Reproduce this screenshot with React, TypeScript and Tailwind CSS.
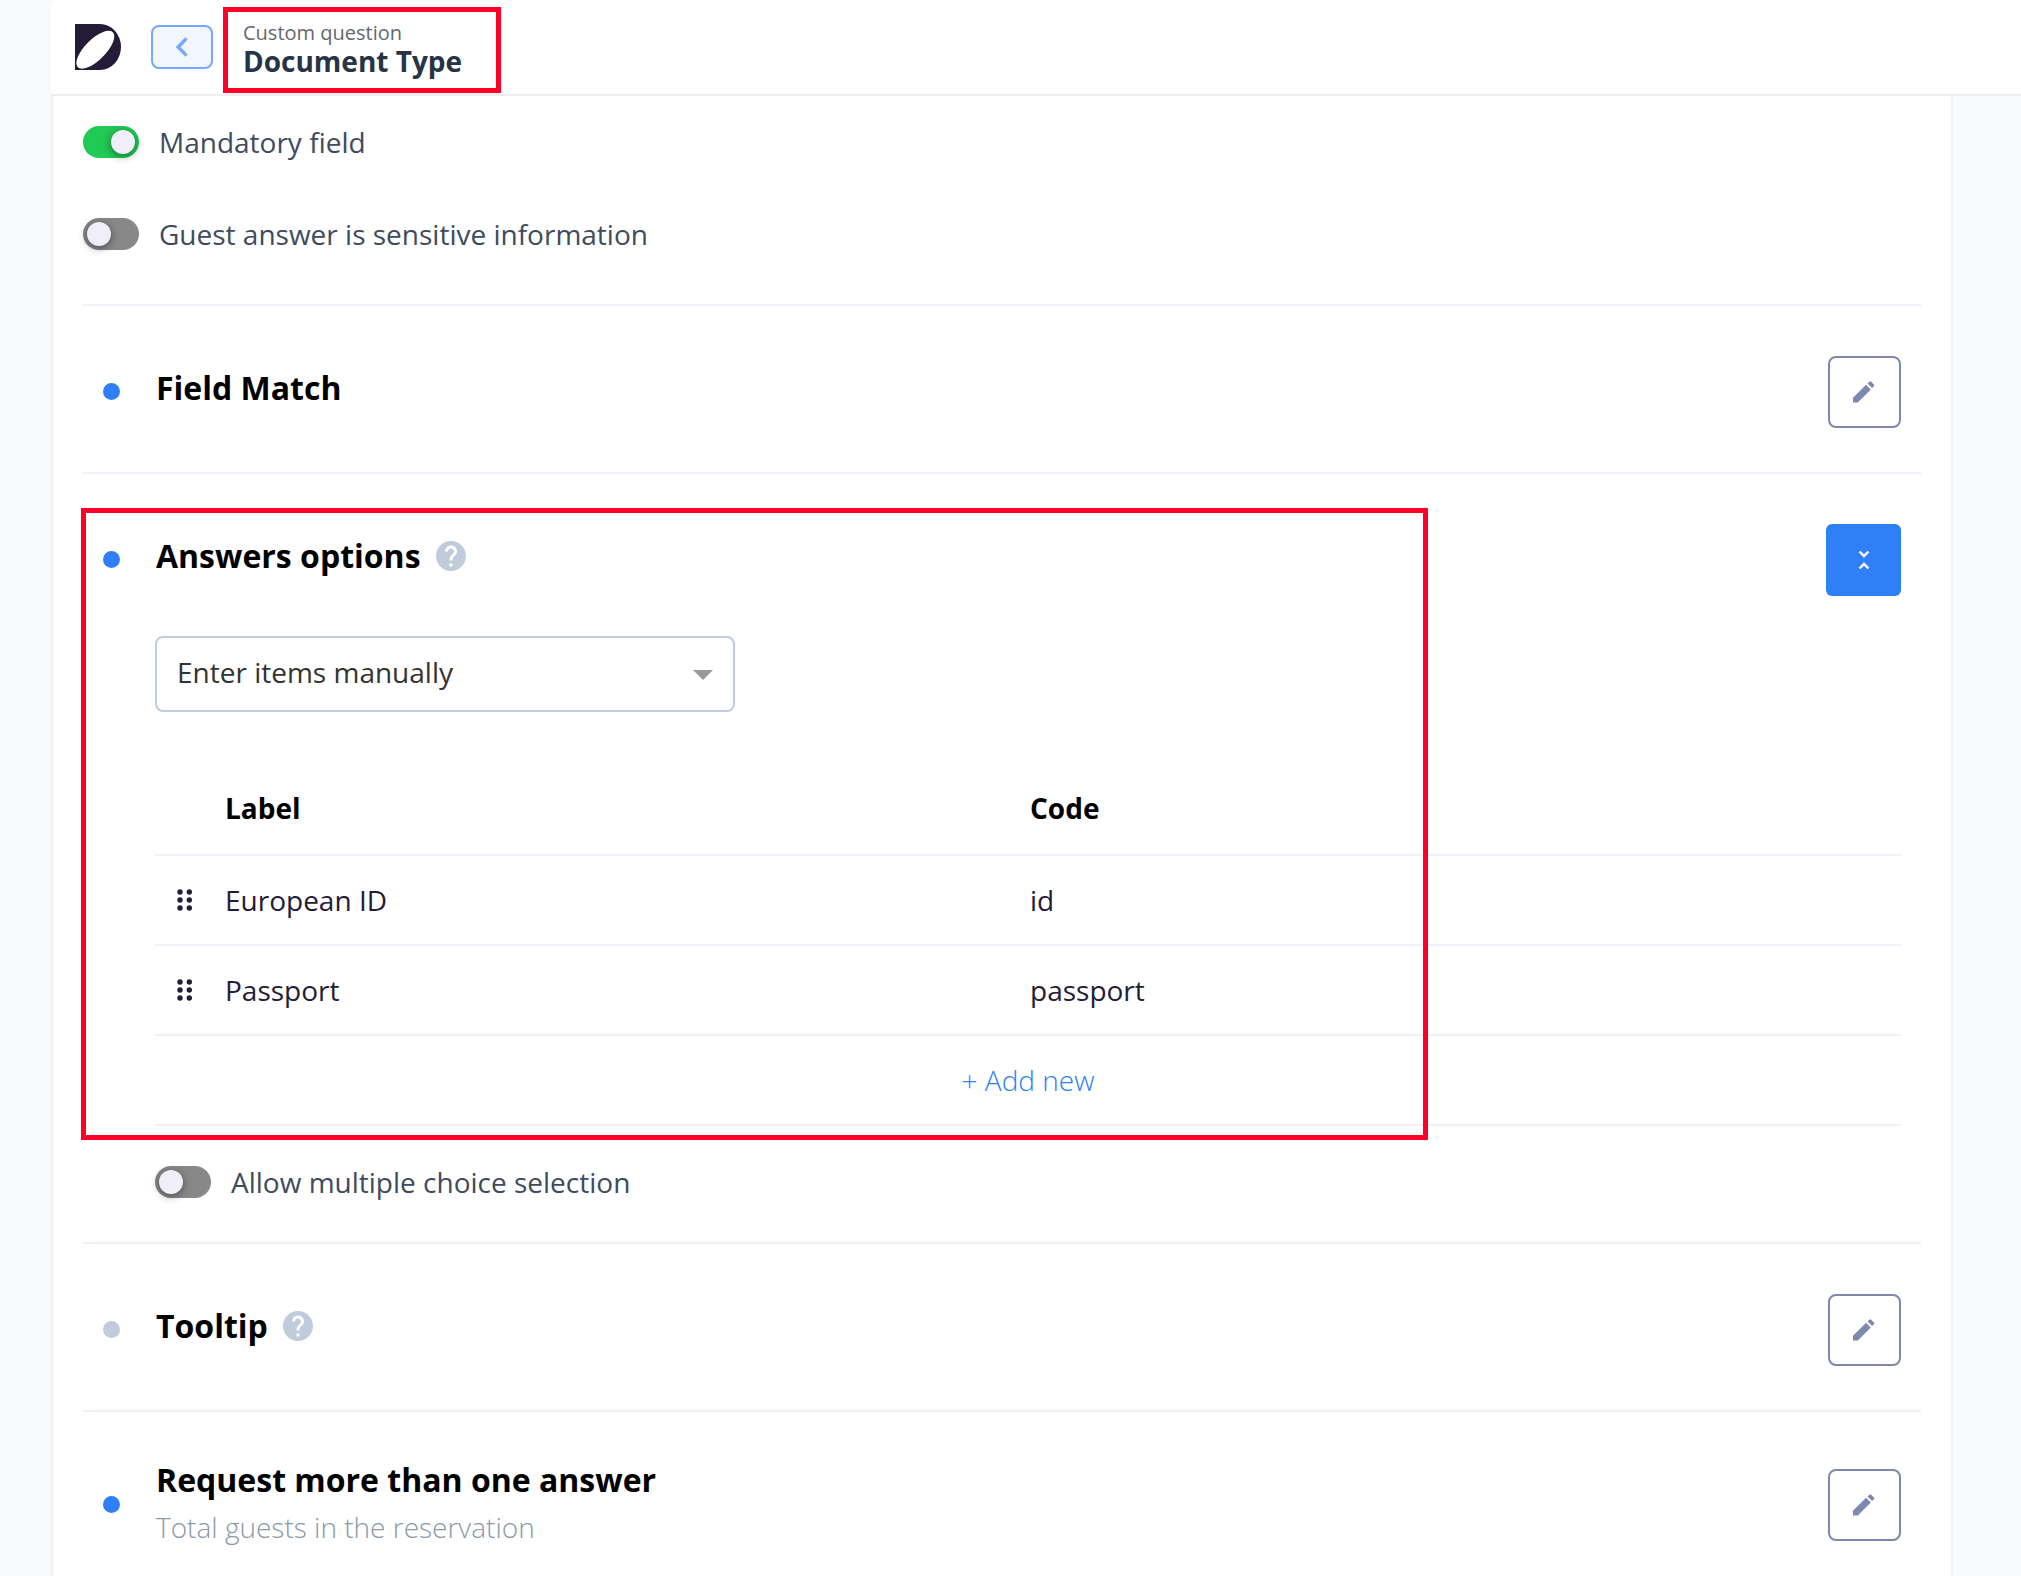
import { ReactNode, useState } from "react";
import { MdHelp, MdUnfoldLess } from "react-icons/md";

const answers = [
  { label: "European ID", code: "id" },
  { label: "Passport", code: "passport" },
];

const Logo = () => (
  <svg className="w-[46px] h-[46px]" viewBox="0 0 46 46" aria-hidden="true">
    <path fill="#241b36" d="M0 0h25a21 23 0 0 1 0 46H0z" />
    <ellipse cx="20.3" cy="25.7" rx="24.8" ry="10.3" transform="rotate(-45 20.3 25.7)" fill="#fff" />
  </svg>
);

const Pencil = () => (
  <svg className="w-[22px] h-[22px]" viewBox="0 0 22 22" fill="currentColor" aria-hidden="true">
    <path d="M0 21.6v-4.8L13.1 3.8l4.7 4.7L4.8 21.6z" />
    <path d="M14.5 2.5 16.4.7q.9-.9 1.8 0l2.7 2.7q.9.9 0 1.8l-1.8 1.9z" />
  </svg>
);

const DragHandle = () => (
  <svg className="w-4 h-[22px]" viewBox="0 0 16 22" fill="#241b36" aria-hidden="true">
    <circle cx="3" cy="3" r="2.7" />
    <circle cx="12.3" cy="3" r="2.7" />
    <circle cx="3" cy="11" r="2.7" />
    <circle cx="12.3" cy="11" r="2.7" />
    <circle cx="3" cy="19" r="2.7" />
    <circle cx="12.3" cy="19" r="2.7" />
  </svg>
);

const Toggle = ({ label, initial = false }: { label: string; initial?: boolean }) => {
  const [checked, setChecked] = useState(initial);
  return (
    <label className="flex items-center gap-5 h-8 text-[28px] text-[#3e4b5e] cursor-pointer">
      <input
        type="checkbox"
        role="switch"
        checked={checked}
        onChange={(e) => setChecked(e.target.checked)}
        className="appearance-none shrink-0 w-14 h-8 p-1 rounded-full bg-[#888888] checked:bg-[#21c955] before:block before:w-6 before:h-6 before:rounded-full before:bg-[#f0eef8] before:shadow-[0_2px_8px_rgba(0,0,0,0.45)] checked:before:translate-x-6"
      />
      {label}
    </label>
  );
};

type SectionProps = {
  title: string;
  subtitle?: string;
  active?: boolean;
  help?: boolean;
  open?: boolean;
  children?: ReactNode;
};

const Section = ({ title, subtitle, active = false, help = false, open = false, children }: SectionProps) => {
  return (
    <section className="relative border-t-2 border-[#eff0f8] px-5 pt-[50px] pb-11">
      <div className="flex items-center min-h-[72px]">
        <span className={active ? "w-[17px] h-[17px] mb-px rounded-full bg-[#2f80f7]" : "w-[17px] h-[17px] mb-px rounded-full bg-[#c0ccdb]"} />
        <div className="flex-1 ml-9">
          <div className="flex items-center gap-3 pb-2">
            <h2 className="text-[32px] leading-9 font-bold text-black">{title}</h2>
            {help && (
              <button type="button" aria-label={"Help: " + title}>
                <MdHelp className="w-9 h-9 text-[#c0ccdb]" />
              </button>
            )}
          </div>
          {subtitle && <p className="text-[28px] leading-[42px] font-light text-[#8b99a9]">{subtitle}</p>}
        </div>
        {open ? (
          <button type="button" aria-label={"Collapse " + title} className="flex items-center justify-center w-[75px] h-[72px] rounded-md bg-[#2f80f7] text-white">
            <MdUnfoldLess className="w-7 h-7" />
          </button>
        ) : (
          <button type="button" aria-label={"Edit " + title} className="flex items-center justify-center w-[73px] h-[72px] pr-px rounded-lg border-2 border-[#7e88ae] text-[#7e88ae]">
            <Pencil />
          </button>
        )}
      </div>
      {children}
    </section>
  );
};

const AnswersTable = () => (
  <table className="w-full mt-[50px] text-left text-[28px] text-[#241b36]">
    <thead>
      <tr className="h-[93px] border-b-2 border-[#eff0f8] text-black">
        <th className="w-[70px]" />
        <th className="w-[805px] font-bold">Label</th>
        <th className="font-bold">Code</th>
      </tr>
    </thead>
    <tbody>
      {answers.map((answer) => (
        <tr key={answer.code} className="h-[90px] border-b-2 border-[#eff0f8]">
          <td className="pl-[22px]">
            <DragHandle />
          </td>
          <td>{answer.label}</td>
          <td>{answer.code}</td>
        </tr>
      ))}
      <tr className="h-[90px] border-b-2 border-[#eff0f8]">
        <td colSpan={3} className="text-center">
          <button type="button" className="font-light text-[#2f80f7]">+ Add new</button>
        </td>
      </tr>
    </tbody>
  </table>
);

const Header = () => (
  <header className="flex items-center h-24 ml-[51px] pl-6 bg-white border-b-2 border-[#ededf0] rounded-tl-lg">
    <Logo />
    <button type="button" aria-label="Back" className="flex items-center justify-center w-[62px] h-11 ml-[30px] rounded-lg border-2 border-[#77a8fb] bg-[#f2f7ff]">
      <svg className="w-3 h-5" viewBox="0 0 12 20" fill="none" aria-hidden="true">
        <path d="M10.5 1.3 2.2 10l8.3 8.7" stroke="#77a8fb" strokeWidth="3.4" />
      </svg>
    </button>
    <div className="w-[278px] h-[86px] ml-[10px] mt-1.5 pl-[15px] pt-2 border-5 border-[#ff0026]">
      <p className="text-[20px] leading-[26px] text-[#63686e]">Custom question</p>
      <h1 className="text-[28px] leading-[30px] font-bold text-[#263445]">Document Type</h1>
    </div>
  </header>
);

export default function App() {
  return (
    <div className="min-h-screen overflow-x-hidden bg-[#f9fafc] font-['Open_Sans',sans-serif]">
      <Header />
      <main className="ml-[51px] mr-[68px] px-[30px] bg-white border-x-2 border-[#eff0f8]">
        <div className="flex flex-col gap-[60px] pt-[30px] pb-[54px]">
          <Toggle label="Mandatory field" initial />
          <Toggle label="Guest answer is sensitive information" />
        </div>
        <Section title="Field Match" active />
        <Section title="Answers options" active help open>
          <div className="ml-[52px] mt-10">
            <div className="relative w-[580px]">
              <select aria-label="Answers source" className="appearance-none w-full h-[76px] px-5 pb-1 rounded-lg border-2 border-[#c0ccdd] bg-white text-[28px] text-[#333333]">
                <option>Enter items manually</option>
              </select>
              <svg className="absolute right-[22px] top-[34px] w-5 h-[10px] pointer-events-none" viewBox="0 0 20 10" aria-hidden="true">
                <path d="M0 0h20L10 10z" fill="#999999" />
              </svg>
            </div>
            <AnswersTable />
            <div className="mt-10">
              <Toggle label="Allow multiple choice selection" />
            </div>
          </div>
          {/* highlight frame */}
          <div className="absolute -left-[2px] top-[34px] bottom-[102px] w-[1347px] max-w-full border-5 border-[#ff0026] pointer-events-none" />
        </Section>
        <Section title="Tooltip" help />
        <Section title="Request more than one answer" subtitle="Total guests in the reservation" active />
      </main>
    </div>
  );
}
